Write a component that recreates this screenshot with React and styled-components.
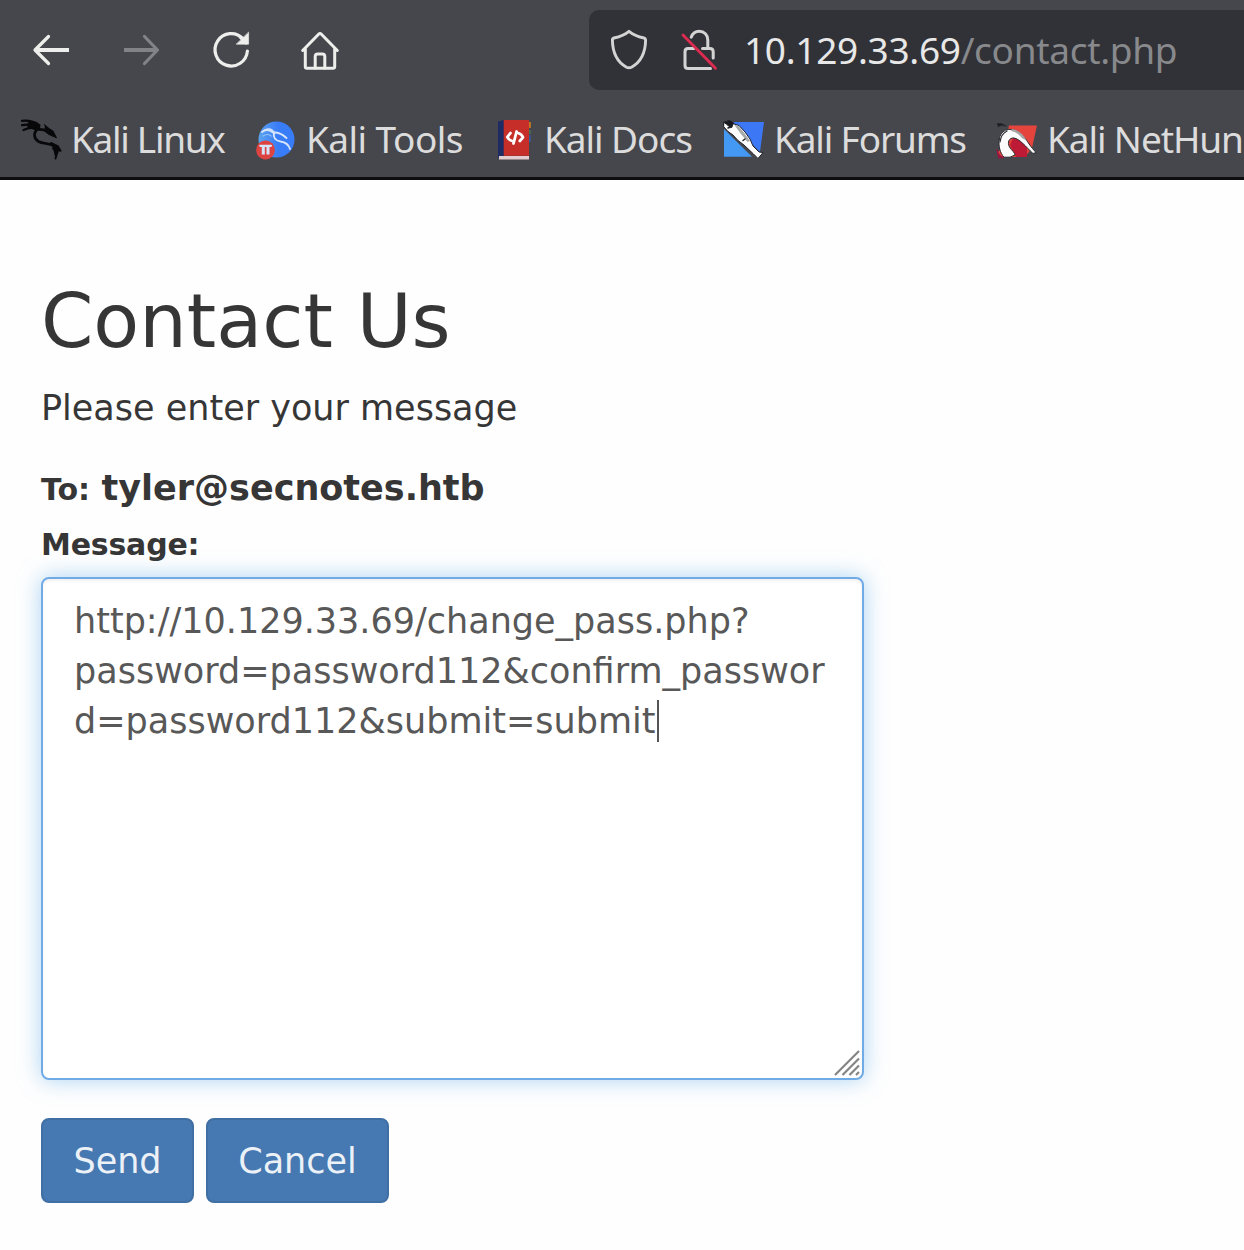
import React from "react";
import styled, { createGlobalStyle } from "styled-components";

const Global = createGlobalStyle`
  * { box-sizing: border-box; }
  body { margin: 0; background: #fff; overflow: hidden; }
`;

const Page = styled.div`
  width: 1244px;
  height: 1250px;
  overflow: hidden;
  background: #fefefe;
  color: #363636;
  font-family: "DejaVu Sans", sans-serif;
`;

const Chrome = styled.header`
  height: 180px;
  background: #46474c;
  border-bottom: 3px solid #0e0e11;
  font-family: "Noto Sans", sans-serif;
  color: #dcdcdd;
  overflow: hidden;
`;

const NavBar = styled.div`
  display: flex;
  align-items: center;
  height: 100px;
  padding-left: 30px;
`;

const NavButtons = styled.div`
  display: flex;
  gap: 50px;
  width: 559px;
`;

const AddressBar = styled.div`
  display: flex;
  align-items: center;
  flex: 1;
  height: 80px;
  padding-left: 20px;
  border-radius: 10px 0 0 10px;
  background: #313237;
  white-space: pre;
`;

const SiteIcons = styled.div`
  display: flex;
  gap: 30px;
  margin-right: 25px;
`;

const UrlPart = styled.span`
  font-size: 37px;
  line-height: 50px;
  letter-spacing: -0.3px;
  color: ${(p) => (p.$muted ? "#88898c" : "#e8e8e8")};
`;

const Bookmarks = styled.nav`
  display: flex;
  height: 78px;
  padding-left: 20px;
`;

const Bookmark = styled.div`
  display: flex;
  align-items: center;
  flex: none;
  width: ${(p) => p.$width}px;
  gap: 11px;
  white-space: pre;
`;

const BookmarkLabel = styled.span`
  font-size: 37px;
  line-height: 50px;
  letter-spacing: ${(p) => p.$tracking}px;
`;

const IconSvg = styled.svg`
  display: block;
  flex: none;
  width: 40px;
  height: 40px;
  overflow: visible;
`;

const Content = styled.main`
  padding: 100px 0 0 41px;
`;

const Title = styled.h2`
  margin: 0;
  font-size: 75px;
  font-weight: 400;
  line-height: 82px;
`;

const Lead = styled.p`
  margin: 21px 0 0;
  font-size: 35px;
  line-height: 50px;
`;

const Recipient = styled.div`
  margin: 30px 0 0;
  font-size: 30px;
  font-weight: 700;
  line-height: 50px;
  white-space: pre;
`;

const Address = styled.strong`
  margin-left: 1px;
  font-size: 35px;
`;

const Label = styled.label`
  display: block;
  margin: 5px 0 7px;
  font-size: 30px;
  font-weight: 700;
  line-height: 50px;
  letter-spacing: -0.2px;
`;

const MessageBox = styled.div`
  position: relative;
  width: 823px;
  height: 503px;
  padding: 17px 31px;
  border: 2px solid #70abe6;
  border-radius: 8px;
  background: #fff;
  box-shadow: inset 0 2px 3px rgba(0, 0, 0, 0.06), 0 0 22px rgba(102, 175, 233, 0.55);
  color: #585858;
  font-size: 35px;
  line-height: 50px;
  white-space: pre;
`;

const Line = styled.div`
  display: flex;
  align-items: center;
  height: 50px;
`;

const Caret = styled.i`
  width: 2px;
  height: 42px;
  margin-left: 2px;
  background: #555;
`;

const Grip = styled.svg`
  position: absolute;
  right: 2px;
  bottom: 2px;
`;

const Actions = styled.div`
  display: flex;
  gap: 12px;
  margin-top: 38px;
`;

const Button = styled.button`
  width: ${(p) => p.$width}px;
  height: 85px;
  padding: 0;
  border: 2px solid #406fa4;
  border-radius: 8px;
  background: #4679b2;
  color: #ecf1f7;
  font: 35px/50px "DejaVu Sans", sans-serif;
`;

const Icon = ({ children, color = "#eeeeec", weight = 3 }) => (
  <IconSvg viewBox="0 0 40 40" fill="none" stroke={color} strokeWidth={weight} strokeLinecap="round" strokeLinejoin="round">
    {children}
  </IconSvg>
);

const BackIcon = () => (
  <Icon weight={4}>
    <path d="M5 20H39" strokeLinecap="butt" />
    <path d="M18.5 6.5 5 20 18.5 33.5" strokeWidth="3.2" />
  </Icon>
);

const ForwardIcon = () => (
  <Icon color="#828387" weight={4}>
    <path d="M4 20H37" strokeLinecap="butt" />
    <path d="M24.5 6.5 37.5 20 24.5 33.5" strokeWidth="3.2" />
  </Icon>
);

const ReloadIcon = () => (
  <Icon weight={3.2}>
    <path d="M37.4 21A16.2 16.2 0 1 1 33 8.6" />
    <path d="M38.6 2.4V14.2H26.5Z" fill="#eeeeec" strokeWidth="0.6" />
    <path d="M30 7 36 13" strokeWidth="3" />
  </Icon>
);

const HomeIcon = () => (
  <Icon weight={3}>
    <path d="M2.7 20.5 18.6 4.2Q20 2.8 21.4 4.2L37.3 20.5" />
    <path d="M5.3 19V36.5Q5.3 38.2 7 38.2H33Q34.7 38.2 34.7 36.5V19" />
    <path d="M15.2 38V26.5Q15.2 24 17.7 24H22.3Q24.8 24 24.8 26.5V38" />
  </Icon>
);

const ShieldIcon = () => (
  <Icon color="#d4d4d4" weight={2.9}>
    <path d="M20 1.3C17 3.8 10.5 6.7 5 8 3.8 8.3 3.4 9 3.4 10 3.6 24 9 32.5 17.5 37.2 19.5 38.2 20.5 38.2 22.5 37.2 31 32.5 36.4 24 36.6 10 36.6 9 36.2 8.3 35 8 29.5 6.7 23 3.8 20 1.3Z" />
  </Icon>
);

const InsecureIcon = () => (
  <Icon color="#d4d4d4" weight={3}>
    <path d="M12.2 7.2C13.6 3.6 16.5 1.3 20.2 1.3 25.3 1.3 28.8 5 28.8 10V18.6H31Q34.2 18.6 34.2 21.8V28" />
    <path d="M12 18.6H9Q6 18.6 6 21.6V35.4Q6 38.4 9 38.4H31.5" />
    <path d="M12 18.6H15M23.5 18.6H29" />
    <path d="M4 5 36.5 38.2" stroke="#dc2b50" strokeWidth="2.9" />
  </Icon>
);

const DragonIcon = () => (
  <Icon color="#08080a" weight={2.7}>
    <path d="M2 1.8Q12 .8 19.5 6.5M2 6.2Q10 4.5 17 8M3.5 11Q11 7.5 17 10" strokeWidth="2.2" />
    <path d="M9 2.5 17 3.5 20 8.5 16 11 8 8Z" fill="#08080a" strokeWidth="1" />
    <path d="M17 10.5C13.5 14 13.5 19.5 18.5 22.5 24 25.5 32 23.5 37.5 29.5" />
    <path d="M17 10.5Q25 10 30 13.5" />
    <path d="M24.5 5.5 29 9.5 33 12 36.5 18.8 29 15.5 25 12.5" fill="#08080a" strokeWidth="1" />
    <path d="M31 24 38 27.5 40.5 31.8 35 30.5ZM33 29.5 37.5 33 35.5 39.5" fill="#08080a" strokeWidth="2" />
  </Icon>
);

const ToolsIcon = () => (
  <Icon color="#d6e5fb" weight={1.9}>
    <defs>
      <linearGradient id="toolsBlue" x1="0" y1="0" x2="1" y2="0">
        <stop offset="0" stopColor="#5da4ee" />
        <stop offset=".55" stopColor="#397cf7" />
      </linearGradient>
    </defs>
    <circle cx="21.5" cy="20.5" r="18" fill="url(#toolsBlue)" stroke="none" />
    <path d="M7 13Q12 8.8 18 13.5 25 12.8 31.5 19" />
    <path d="M10 11Q16 8 19.5 14" strokeWidth="1.4" />
    <path d="M19 13.5Q17.5 21 25.5 22.5 33 23.5 35 30" />
    <path d="M8 17Q13 14 16 17" stroke="#9cc6f8" strokeWidth="1.2" />
    <circle cx="10.5" cy="31" r="9.4" fill="#dc4341" stroke="none" />
    <path d="M5.2 26.8H16" strokeWidth="2.2" />
    <path d="M8.3 27V35.5M13 27V35.5" strokeWidth="3" strokeLinecap="butt" />
  </Icon>
);

const DocsIcon = () => (
  <Icon color="#fff" weight={2.8}>
    <path d="M5 2.5 11 1V37L5 39Z" fill="#1f2c63" stroke="none" />
    <path d="M6 37H36V40.5H6Z" fill="#e2cdd0" stroke="none" />
    <path d="M10.7 1H36V36.8H10.7Z" fill="#c62e2a" stroke="none" />
    <path d="M36 3H37.8V9H36Z" fill="#c77a22" stroke="none" />
    <path d="M36 11H37.8V15H36Z" fill="#3f7557" stroke="none" />
    <path d="M36 16H37.8V23H36Z" fill="#35599b" stroke="none" />
    <path d="M17.5 14 14.3 18.2Q16 21.3 19.4 22M20.5 24.5 23.6 12.5M25 14Q28.5 15 30 18.3L26.8 22" />
  </Icon>
);

const ForumsIcon = () => (
  <Icon color="#22242b" weight={1}>
    <path d="M10 3H41L37 33 30 26Z" fill="#3c77f5" stroke="none" />
    <path d="M1 10V37.7H29Z" fill="#4399f4" stroke="none" />
    <path d="M1 3.5 6 1.5 11 5 16 6.5 22 13 27 20 30 27 36 33 40 33.5 38 36 35 39.5 30.5 35 21 26 15 21.5 10 16 5 12.5 1 8Z" fill="#fdfdfd" strokeWidth="1" />
    <path d="M1 3.2 6.5 1.5 10.8 4 8 9 3.8 5.5Z" fill="#17191f" />
    <path d="M11 5.5 16 7.5 22 15 27 22 24.5 23 18 15Z" fill="#a8a9a9" stroke="none" />
    <path d="M5 9 9 7.5M20 21.5 22 20" strokeWidth="1.5" />
  </Icon>
);

const NetHunterIcon = () => (
  <Icon color="#2b2a31" weight={1}>
    <path d="M13 6.5H41L36 29 29 38H5L1 34 9 26Z" fill="#e4443c" stroke="none" />
    <path d="M14 26 18 17 31 27 31 38H20Z" fill="#bd1b35" stroke="none" />
    <path d="M1 31Q3 38 8 38.5L3 39Z" fill="#991440" stroke="#991440" />
    <path d="M1 4.5 5.5 4.5 10.5 7Q5 5.8 2 7.5" fill="#1b1c22" />
    <path d="M3.2 20.5C4 11.5 13 7.5 21.5 12.5 29 17 31.5 23.5 36.5 29.5L40 33.5 37 34.5C30 28 24 20 18 19 13 18.5 11 23.5 13.5 28 16 32 19 33.5 19 36L14 38.2H8C4 34 2.3 27 3.2 20.5Z" fill="#fbfbfb" strokeWidth="1" />
    <path d="M16 10Q25 11 31 22L26 19Q21 13 15 12Z" fill="#a5a5a8" stroke="none" />
    <path d="M4 23Q5 15 11 12" strokeWidth="1.2" />
  </Icon>
);

const bookmarks = [
  { label: "Kali Linux", width: 235, tracking: -1.3, Glyph: DragonIcon },
  { label: "Kali Tools", width: 238, tracking: -0.55, Glyph: ToolsIcon },
  { label: "Kali Docs", width: 230, tracking: -1.05, Glyph: DocsIcon },
  { label: "Kali Forums", width: 273, tracking: -1.15, Glyph: ForumsIcon },
  { label: "Kali NetHun", width: 248, tracking: -1.1, Glyph: NetHunterIcon },
];

export default function App() {
  return (
    <Page>
      <Global />
      <Chrome>
        <NavBar>
          <NavButtons>
            <BackIcon />
            <ForwardIcon />
            <ReloadIcon />
            <HomeIcon />
          </NavButtons>
          <AddressBar>
            <SiteIcons>
              <ShieldIcon />
              <InsecureIcon />
            </SiteIcons>
            <UrlPart>10.129.33.69</UrlPart>
            <UrlPart $muted>/contact.php</UrlPart>
          </AddressBar>
        </NavBar>
        <Bookmarks>
          {bookmarks.map(({ label, width, tracking, Glyph }) => (
            <Bookmark key={label} $width={width}>
              <Glyph />
              <BookmarkLabel $tracking={tracking}>{label}</BookmarkLabel>
            </Bookmark>
          ))}
        </Bookmarks>
      </Chrome>
      <Content>
        <Title>Contact Us</Title>
        <Lead>Please enter your message</Lead>
        <Recipient>
          To: <Address>tyler@secnotes.htb</Address>
        </Recipient>
        <Label>Message:</Label>
        <MessageBox>
          <Line>http://10.129.33.69/change_pass.php?</Line>
          <Line>password=password112&amp;confirm_passwor</Line>
          <Line>
            d=password112&amp;submit=submit
            <Caret />
          </Line>
          <Grip width="26" height="26" viewBox="0 0 26 26" fill="none" stroke="#858585" strokeWidth="2.2">
            <path d="M1 25 25 1M8.5 25 25 8.5M15.5 25 25 15.5M22 25 25 22" />
          </Grip>
        </MessageBox>
        <Actions>
          <Button $width={153}>Send</Button>
          <Button $width={183}>Cancel</Button>
        </Actions>
      </Content>
    </Page>
  );
}
